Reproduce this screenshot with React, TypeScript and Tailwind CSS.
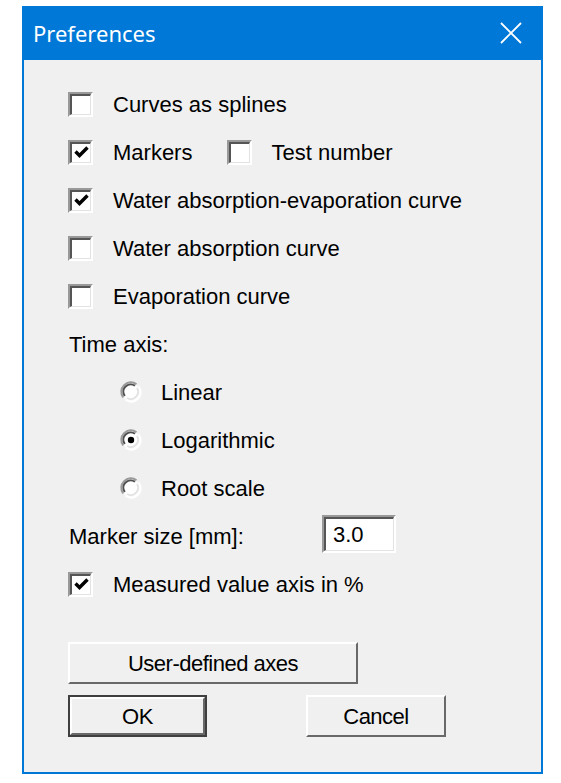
import React from "react";

const font = { fontFamily: '"Liberation Sans", Arial, sans-serif' };

function CheckBox({ checked }: { checked?: boolean }) {
  return (
    <div className="w-[25px] h-[25px] shrink-0 border-t-2 border-l-2 border-t-[#999999] border-l-[#999999] border-b-2 border-r-2 border-b-white border-r-white">
      <div className="w-full h-full border-t-2 border-l-2 border-t-[#555555] border-l-[#555555] border-b border-r border-b-[#e3e3e3] border-r-[#e3e3e3] bg-white flex items-center justify-center">
        {checked && (
          <svg width="17" height="17" viewBox="0 0 17 17">
            <path d="M2.5 7.5 L6.5 11.5 L14.5 3.5" fill="none" stroke="#000" strokeWidth="3.4" />
          </svg>
        )}
      </div>
    </div>
  );
}

function Radio({ checked }: { checked?: boolean }) {
  return (
    <svg width="24" height="24" viewBox="0 0 24 24" className="shrink-0">
      <circle cx="12" cy="12" r="9" fill="#fff" />
      <path d="M4.2 17.5 A9.5 9.5 0 0 1 17.5 4.2" fill="none" stroke="#9a9a9a" strokeWidth="2" />
      <path d="M5.8 16 A7.3 7.3 0 0 1 16 5.8" fill="none" stroke="#505050" strokeWidth="2" />
      <path d="M19.8 6.5 A9.5 9.5 0 0 1 6.5 19.8" fill="none" stroke="#ffffff" strokeWidth="2" />
      <path d="M18 8 A7.3 7.3 0 0 1 8 18" fill="none" stroke="#e3e3e3" strokeWidth="2" />
      {checked && <circle cx="12" cy="12" r="3.2" fill="#000" />}
    </svg>
  );
}

function Row({ children, className = "" }: { children: React.ReactNode; className?: string }) {
  return <div className={`h-[48px] flex items-center ${className}`}>{children}</div>;
}

function Button({ label, className = "", isDefault }: { label: string; className?: string; isDefault?: boolean }) {
  const inner = (
    <div className="w-full h-full border-t-2 border-l-2 border-t-white border-l-white border-b-2 border-r-2 border-b-[#696969] border-r-[#696969] flex items-center justify-center bg-[#f0f0f0]">
      <span className="text-[22px] text-black tracking-[-0.5px]">{label}</span>
    </div>
  );
  if (isDefault) {
    return <div className={`border-2 border-[#404040] ${className}`}>{inner}</div>;
  }
  return <div className={className}>{inner}</div>;
}

export default function App() {
  return (
    <div className="w-[561px] h-[783px] bg-white pt-[6px] pl-[22px]" style={font}>
      <div className="w-[521px] h-[768px] bg-[#0078d7] flex flex-col px-[2px] pb-[2px]">
        {/* Title bar */}
        <div className="h-[54px] flex items-center justify-between pl-[9px] pr-[19px]">
          <span className="text-white text-[22px]" style={{ fontFamily: '"Noto Sans", "Open Sans", sans-serif' }}>
            Preferences
          </span>
          <svg width="22" height="22" viewBox="0 0 22 22">
            <path d="M1 1 L21 21 M21 1 L1 21" stroke="#fff" strokeWidth="1.8" />
          </svg>
        </div>

        {/* Content */}
        <div className="flex-1 bg-[#f0f0f0] pt-[20px] pl-[44px] text-[22px] text-black">
          <Row>
            <CheckBox />
            <span className="ml-[20px]">Curves as splines</span>
          </Row>
          <Row>
            <CheckBox checked />
            <span className="ml-[20px]">Markers</span>
            <div className="ml-[35px]">
              <CheckBox />
            </div>
            <span className="ml-[19px]">Test number</span>
          </Row>
          <Row>
            <CheckBox checked />
            <span className="ml-[20px]">Water absorption-evaporation curve</span>
          </Row>
          <Row>
            <CheckBox />
            <span className="ml-[20px]">Water absorption curve</span>
          </Row>
          <Row>
            <CheckBox />
            <span className="ml-[20px]">Evaporation curve</span>
          </Row>
          <Row>
            <span className="ml-[1px]">Time axis:</span>
          </Row>
          <Row className="pl-[51px]">
            <Radio />
            <span className="ml-[18px]">Linear</span>
          </Row>
          <Row className="pl-[51px]">
            <Radio checked />
            <span className="ml-[18px]">Logarithmic</span>
          </Row>
          <Row className="pl-[51px]">
            <Radio />
            <span className="ml-[18px]">Root scale</span>
          </Row>
          <Row>
            <span className="ml-[1px] w-[253px]">Marker size [mm]:</span>
            <div className="w-[74px] h-[38px] -mt-[4px] border-t-2 border-l-2 border-t-[#999999] border-l-[#999999] border-b-2 border-r-2 border-b-white border-r-white">
              <div className="w-full h-full border-t-2 border-l-2 border-t-[#555555] border-l-[#555555] border-b border-r border-b-[#e3e3e3] border-r-[#e3e3e3] bg-white flex items-center pl-[7px]">
                3.0
              </div>
            </div>
          </Row>
          <Row>
            <CheckBox checked />
            <span className="ml-[20px]">Measured value axis in %</span>
          </Row>

          <Button label="User-defined axes" className="w-[290px] h-[42px] mt-[34px]" />
          <div className="flex mt-[11px]">
            <Button label="OK" isDefault className="w-[139px] h-[42px]" />
            <Button label="Cancel" className="w-[140px] h-[42px] ml-[99px]" />
          </div>
        </div>
      </div>
    </div>
  );
}
